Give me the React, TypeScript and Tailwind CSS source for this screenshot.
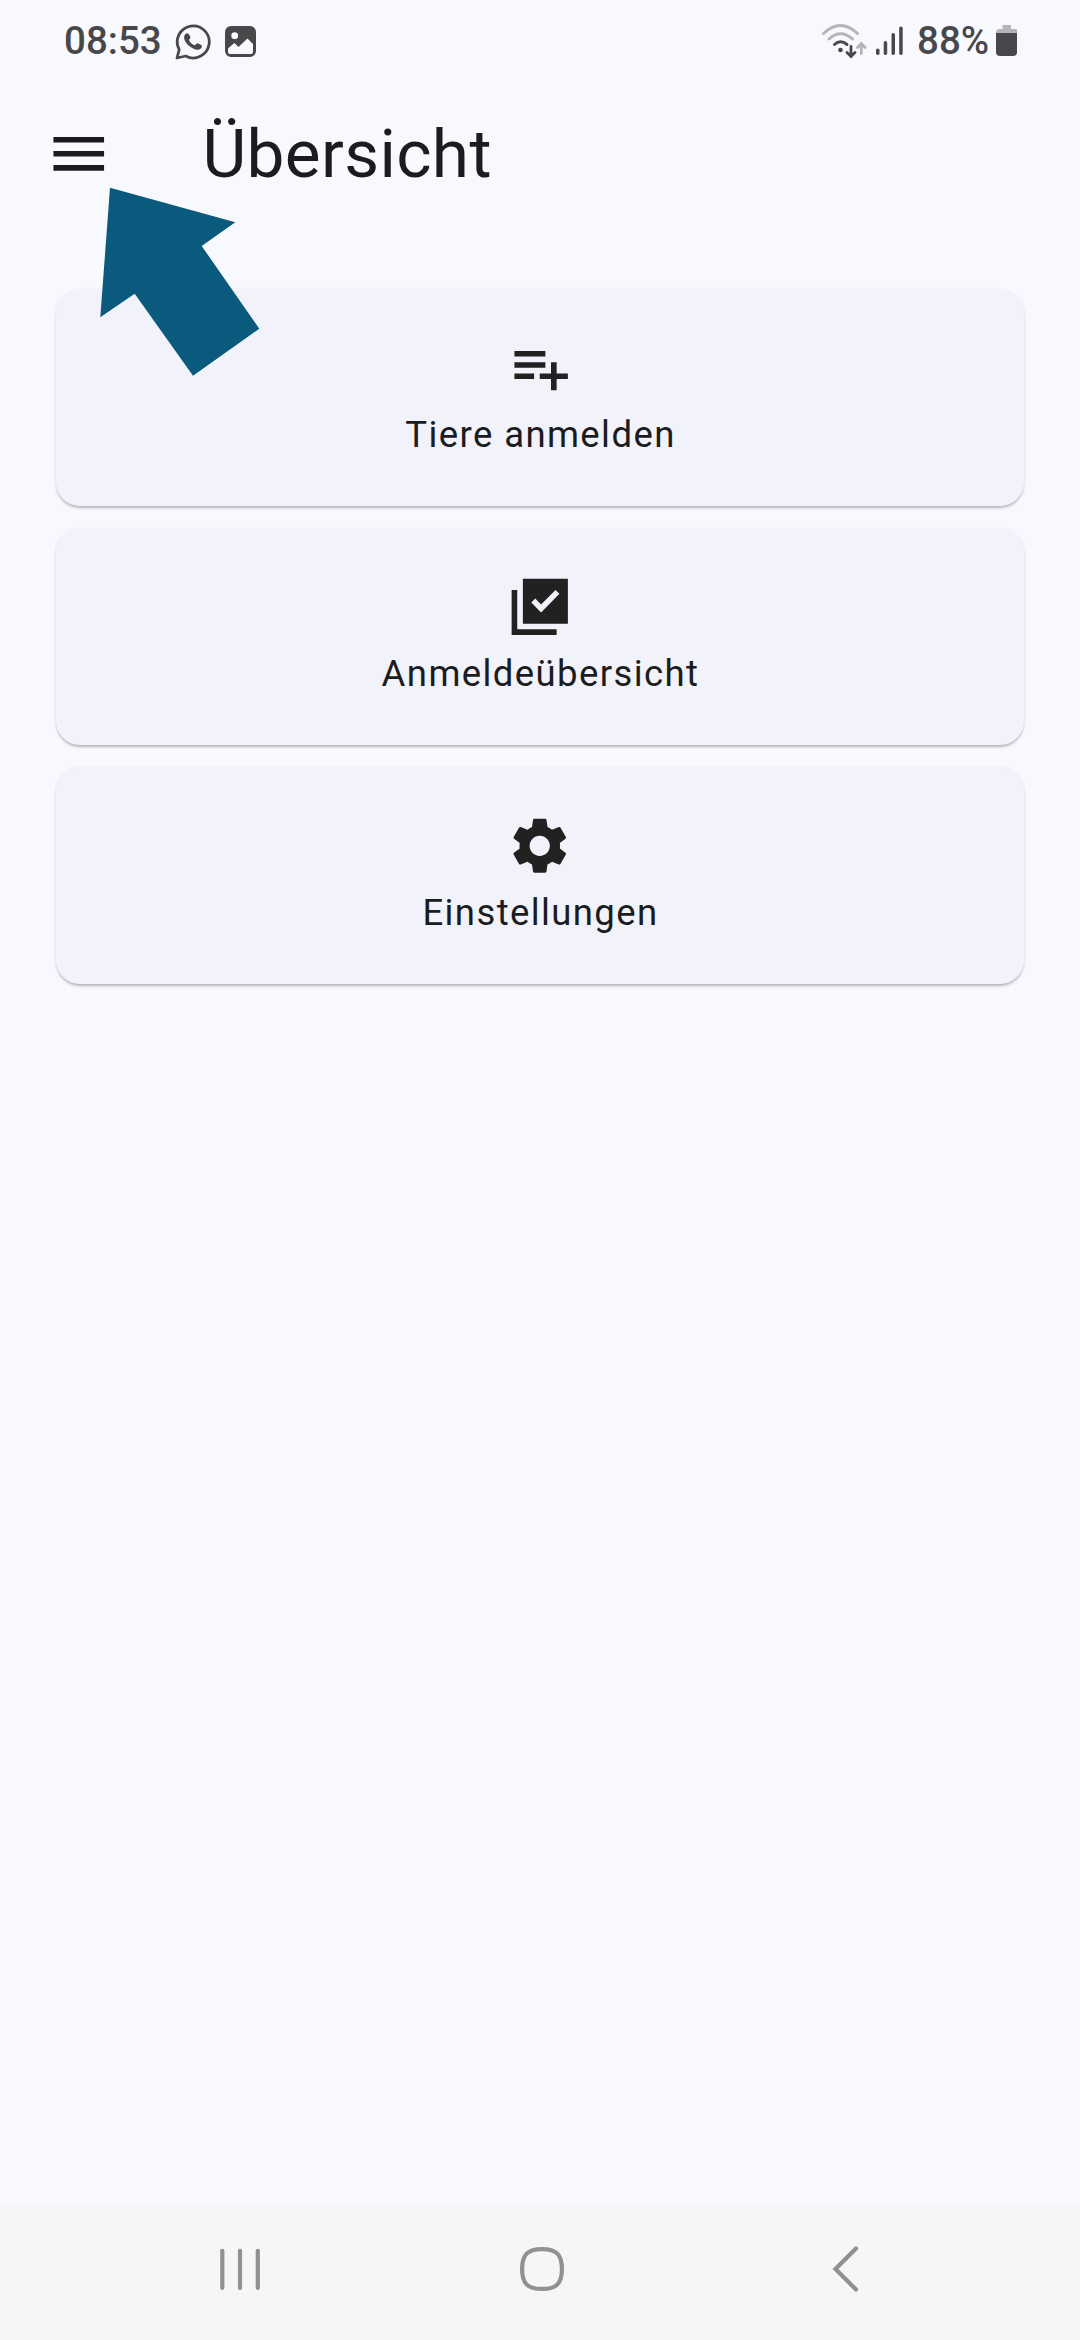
import type { ReactNode } from "react";

function StatusBar() {
  return (
    <div className="flex h-[82px] items-center justify-between pl-[64px] pr-[63px] text-[#48484b]">
      <div className="flex items-center">
        <span className="w-[111px] whitespace-nowrap text-[38.5px] font-medium leading-none">08:53</span>
        <svg width="36" height="37" viewBox="0 0 36 37" fill="none" className="shrink-0">
          <path
            d="M2 35 L4.2 26.6 A16 16 0 1 1 10.6 33 Z"
            stroke="currentColor"
            strokeWidth="2.8"
            strokeLinejoin="round"
          />
          <path
            d="M11.8 10.2c-2 .8-3 3-2.6 5.300.5 2.600 2.300 5.200 4.700 7.300 2.700 2.300 5.800 4 8.500 4 2.600 0 4.500-1.600 4.600-3.700 0-.9-3.900-2.900-4.800-2.900-.9.2-1.700 2.100-2.500 2.100-1.900-.5-5.200-3.500-5.700-5.400 0-.8 1.500-1.700 1.500-2.500-.2-1-1.600-4.200-3.700-4.200z"
            fill="currentColor"
          />
        </svg>
        <svg width="31" height="31" viewBox="0 0 31 31" className="ml-[14px] shrink-0">
          <path
            fillRule="evenodd"
            fill="currentColor"
            d="M6 0h19a6 6 0 0 1 6 6v19a6 6 0 0 1-6 6H6a6 6 0 0 1-6-6V6a6 6 0 0 1 6-6zM9.700 6.300a3.400 3.400 0 1 0 0 6.800 3.400 3.400 0 0 0 0-6.800zM3 22.500V26a2 2 0 0 0 2 2h21a2 2 0 0 0 2-2V18l-5.500-5.500L13.500 21l-4.200-4z"
          />
        </svg>
      </div>
      <div className="flex items-center">
        <svg width="46" height="36" viewBox="0 0 46 36" fill="none" strokeLinecap="round" className="shrink-0">
          <g strokeWidth="3">
            <path d="M2.500 10.500 Q19.500-5.500 36.500 10.500" stroke="#b5b5b9" />
            <path d="M8 16 Q19.500 5.500 31.500 16" stroke="#b5b5b9" />
            <path d="M13.500 21.500 Q19.500 16 26 21.500" stroke="currentColor" />
          </g>
          <circle cx="19.500" cy="27" r="2.300" fill="currentColor" />
          <path d="M30 23.500V33M26 29.500l4 4 4-4" stroke="currentColor" strokeWidth="2.800" />
          <path d="M40.300 30.500V21M36.500 24.500l3.800-4 3.800 4" stroke="#b5b5b9" strokeWidth="2.800" />
        </svg>
        <svg width="27" height="30" viewBox="0 0 27 30" className="ml-[9px] shrink-0" fill="currentColor">
          <rect x="0" y="22.500" width="3.500" height="6.500" rx="1.700" />
          <rect x="7.700" y="15" width="3.500" height="14" rx="1.700" />
          <rect x="15.500" y="7" width="3.500" height="22" rx="1.700" />
          <rect x="23.200" y="0.500" width="3.500" height="28.500" rx="1.700" />
        </svg>
        <span className="ml-[14px] w-[79px] whitespace-nowrap text-[38.5px] font-medium leading-none">88%</span>
        <svg width="21" height="32" viewBox="0 0 21 32" className="shrink-0">
          <path d="M6.500 0h8.500v4H21v6H0V8a4 4 0 0 1 4-4h2.500z" fill="#b5b5b9" />
          <path d="M0 8h21v19a4 4 0 0 1-4 4H4a4 4 0 0 1-4-4z" fill="currentColor" />
        </svg>
      </div>
    </div>
  );
}

function TopBar() {
  return (
    <div className="relative flex h-[144px] items-center pl-[45px]">
      <svg width="67.5" height="67.5" viewBox="0 0 24 24" fill="#1a1c20" className="shrink-0">
        <path d="M3 18h18v-2H3v2zm0-5h18v-2H3v2zm0-7v2h18V6H3z" />
      </svg>
      <h1 className="ml-[90px] text-[67.5px] leading-none tracking-[0.35px] text-[#1a1c20]">Übersicht</h1>
      {/* Arrow pointing at the menu button */}
      <svg
        width="160"
        height="190"
        viewBox="0 0 160 190"
        fill="#0a5a7e"
        className="absolute left-[100px] top-[105px] z-10"
      >
        <path d="M10 .7 135.300 35.300 101.700 59 159.300 141.700 93 188.700 34.700 106.700.3 130.300z" />
      </svg>
    </div>
  );
}

function Tile({ label, children }: { label: string; children: ReactNode }) {
  return (
    <button className="flex h-[217px] flex-col items-center rounded-[24px] bg-[#f2f2fa] pt-[45px] shadow-[0_3px_3px_-1px_rgba(0,0,0,0.22),0_1px_3px_rgba(0,0,0,0.1)]">
      <svg width="67.5" height="67.5" viewBox="0 0 24 24" fill="#202120" className="shrink-0">
        {children}
      </svg>
      <span className="mt-[11px] pl-px text-[36.5px] leading-[44px] tracking-[1.4px] text-[#1a1c20]">{label}</span>
    </button>
  );
}

function NavBar() {
  return (
    <div className="flex h-[135px] items-center bg-[#f6f6f8] pl-[220px]">
      <svg width="40" height="46" viewBox="0 0 40 46" stroke="#919193" strokeWidth="4.200" strokeLinecap="round" className="mb-[7px] shrink-0">
        <path d="M2.300 4.800V42M20 4.800V42M37.800 4.800V42" />
      </svg>
      <svg width="46" height="46" viewBox="0 0 46 46" fill="none" stroke="#919193" strokeWidth="4.200" className="mb-[7px] ml-[259px] shrink-0">
        <path d="M23 3.100C37.500 3.100 42.900 8.500 42.900 23S37.500 42.900 23 42.900 3.100 37.500 3.100 23 8.500 3.100 23 3.100z" />
      </svg>
      <svg width="28" height="46" viewBox="0 0 28 46" fill="none" stroke="#919193" strokeWidth="4.200" strokeLinecap="round" className="mb-[7px] ml-[266px] shrink-0">
        <path d="M25 2.500 4.500 23 25 43.500" />
      </svg>
    </div>
  );
}

export default function App() {
  return (
    <div className="flex h-[2340px] w-[1080px] flex-col bg-[#f8f9ff] font-[Roboto,sans-serif]">
      <StatusBar />
      <TopBar />
      <main className="flex flex-1 flex-col gap-[22px] px-[56px] pt-[63px]">
        <Tile label="Tiere anmelden">
          <path d="M14 10H3v2h11v-2zm0-4H3v2h11V6zm4 8v-4h-2v4h-4v2h4v4h2v-4h4v-2h-4zM3 16h7v-2H3v2z" />
        </Tile>
        <Tile label="Anmeldeübersicht">
          <path d="M22 2H6v16h16V2zm-9.530 12L9 10.500l1.400-1.410 2.070 2.080L17.600 6 19 7.410 12.470 14zM4 6H2v16h16v-2H4V6z" />
        </Tile>
        <Tile label="Einstellungen">
          <path d="M19.140 12.940c.04-.3.06-.61.06-.94 0-.32-.02-.64-.07-.94l2.030-1.580c.18-.14.23-.41.12-.61l-1.920-3.320c-.12-.22-.37-.29-.59-.22l-2.390.96c-.5-.38-1.030-.7-1.620-.94l-.36-2.540c-.04-.24-.24-.41-.48-.41h-3.840c-.24 0-.43.17-.47.41l-.36 2.540c-.59.24-1.130.57-1.620.94l-2.390-.96c-.22-.08-.47 0-.59.22L2.740 8.870c-.12.21-.08.47.12.61l2.030 1.580c-.05.3-.09.63-.09.94s.02.64.07.94l-2.030 1.580c-.18.14-.23.41-.12.61l1.920 3.320c.12.22.37.29.59.22l2.390-.96c.5.38 1.030.7 1.620.94l.36 2.540c.05.24.24.41.48.41h3.840c.24 0 .44-.17.47-.41l.36-2.540c.59-.24 1.130-.56 1.620-.94l2.390.96c.22.08.47 0 .59-.22l1.920-3.320c.12-.22.07-.47-.12-.61l-2.010-1.580zM12 15.600c-1.980 0-3.600-1.620-3.600-3.600s1.620-3.600 3.600-3.600 3.600 1.620 3.600 3.600-1.620 3.600-3.600 3.600z" />
        </Tile>
      </main>
      <NavBar />
    </div>
  );
}
